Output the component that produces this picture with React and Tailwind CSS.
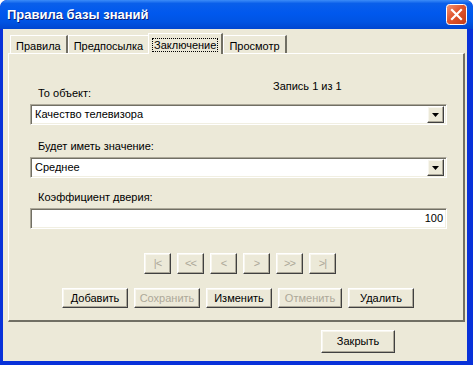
import React from "react";

const raised =
  "border border-t-white border-l-white border-r-[#404040] border-b-[#404040] shadow-[inset_-1px_-1px_0_#aca899,inset_1px_1px_0_#f8f6ee] bg-[#ece9d8]";
const sunken =
  "border border-t-[#aca899] border-l-[#aca899] border-r-white border-b-white shadow-[inset_1px_1px_0_#716f64,inset_-1px_-1px_0_#f1efe2] bg-white";

function CloseIcon() {
  return (
    <svg width="21" height="21" viewBox="0 0 21 21" className="-mr-[1px]">
      <defs>
        <linearGradient id="cb" x1="0" y1="0" x2="1" y2="1">
          <stop offset="0" stopColor="#f29778" />
          <stop offset="0.45" stopColor="#e0552e" />
          <stop offset="1" stopColor="#c23c16" />
        </linearGradient>
      </defs>
      <rect x="0.5" y="0.5" width="20" height="20" rx="3" fill="url(#cb)" stroke="#fff" />
      <path d="M6 6l9 9M15 6l-9 9" stroke="#fff" strokeWidth="2.2" strokeLinecap="square" />
    </svg>
  );
}

function Combo({ value }) {
  return (
    <div className={`${sunken} h-[21px] flex items-center pl-[4px] pr-[2px]`}>
      <span className="flex-1">{value}</span>
      <div className={`${raised} w-[17px] h-[17px] flex items-center justify-center`}>
        <svg width="7" height="4" viewBox="0 0 7 4">
          <path d="M0 0h7L3.5 4z" fill="#000" />
        </svg>
      </div>
    </div>
  );
}

function NavButton({ children }) {
  return (
    <button
      className={`${raised} w-[27px] h-[21px] flex items-center justify-center text-[#aca899] text-[11px] tracking-[-1px]`}
    >
      {children}
    </button>
  );
}

function ActionButton({ children, disabled, w = "w-[66px] h-[20px]" }) {
  return (
    <button
      className={`${raised} ${w} flex items-center justify-center ${
        disabled ? "text-[#aca899]" : "text-black"
      }`}
    >
      {children}
    </button>
  );
}

function Tab({ children, active }) {
  if (active) {
    return (
      <div className="relative z-10 -mb-[1px] h-[21px] px-[4px] pt-[3px] bg-[#ece9d8] border-l border-t border-white border-r-2 border-r-[#716f64] -ml-[2px]">
        <span className="px-[1px] outline outline-1 outline-dotted outline-black">{children}</span>
      </div>
    );
  }
  return (
    <div className="h-[18px] px-[5px] pt-[2px] bg-[#ece9d8] border-l border-t border-white border-r-2 border-r-[#716f64]">
      {children}
    </div>
  );
}

export default function App() {
  return (
    <div
      className="w-[473px] h-[365px] rounded-t-[7px] bg-[#0831d9] flex flex-col text-[11px] text-black overflow-hidden"
      style={{ fontFamily: '"Liberation Sans", Arial, sans-serif' }}
    >
      {/* title bar */}
      <div className="h-[29px] flex items-center px-[7px] bg-[linear-gradient(to_bottom,#3c8cf8_0%,#0a5fea_12%,#0058ee_45%,#0054e3_75%,#0046d0_100%)] rounded-t-[7px]">
        <span className="flex-1 text-white font-bold text-[13px] [text-shadow:1px_1px_0_#0a1e7a] pt-[1px]">
          Правила базы знаний
        </span>
        <CloseIcon />
      </div>

      {/* body */}
      <div className="flex-1 ml-[3px] mr-[6px] mb-[4px] bg-[#ece9d8] flex flex-col">
        <div className="flex items-end pl-[7px] h-[24px]">
          <Tab>Правила</Tab>
          <Tab>Предпосылка</Tab>
          <Tab active>Заключение</Tab>
          <Tab>Просмотр</Tab>
        </div>

        <div className="ml-[5px] w-[457px] h-[269px] border-l border-t border-white border-r-2 border-b-2 border-r-[#716f64] border-b-[#716f64] flex flex-col pl-[21px] pr-[16px]">
          <div className="flex items-start mt-[24px] h-[26px]">
            <span className="w-[243px] pl-[8px] mt-[7px]">То объект:</span>
            <span>Запись 1 из 1</span>
          </div>
          <Combo value="Качество телевизора" />

          <span className="pl-[8px] mt-[13px] h-[19px]">Будет иметь значение:</span>
          <Combo value="Среднее" />

          <span className="pl-[8px] mt-[11px] h-[19px]">Коэффициент дверия:</span>
          <div className={`${sunken} h-[21px] flex items-center justify-end pr-[3px]`}>100</div>

          <div className="flex mt-[24px] ml-[114px] gap-[6px]">
            <NavButton>|&lt;</NavButton>
            <NavButton>&lt;&lt;</NavButton>
            <NavButton>&lt;</NavButton>
            <NavButton>&gt;</NavButton>
            <NavButton>&gt;&gt;</NavButton>
            <NavButton>&gt;|</NavButton>
          </div>

          <div className="flex mt-[14px] ml-[32px] gap-[6px]">
            <ActionButton>Добавить</ActionButton>
            <ActionButton disabled>Сохранить</ActionButton>
            <ActionButton>Изменить</ActionButton>
            <ActionButton disabled w="w-[64px] h-[20px]">Отменить</ActionButton>
            <ActionButton>Удалить</ActionButton>
          </div>
        </div>

        <div className="flex justify-end mt-[8px] pr-[72px]">
          <ActionButton w="w-[74px] h-[23px]">Закрыть</ActionButton>
        </div>
      </div>
    </div>
  );
}
